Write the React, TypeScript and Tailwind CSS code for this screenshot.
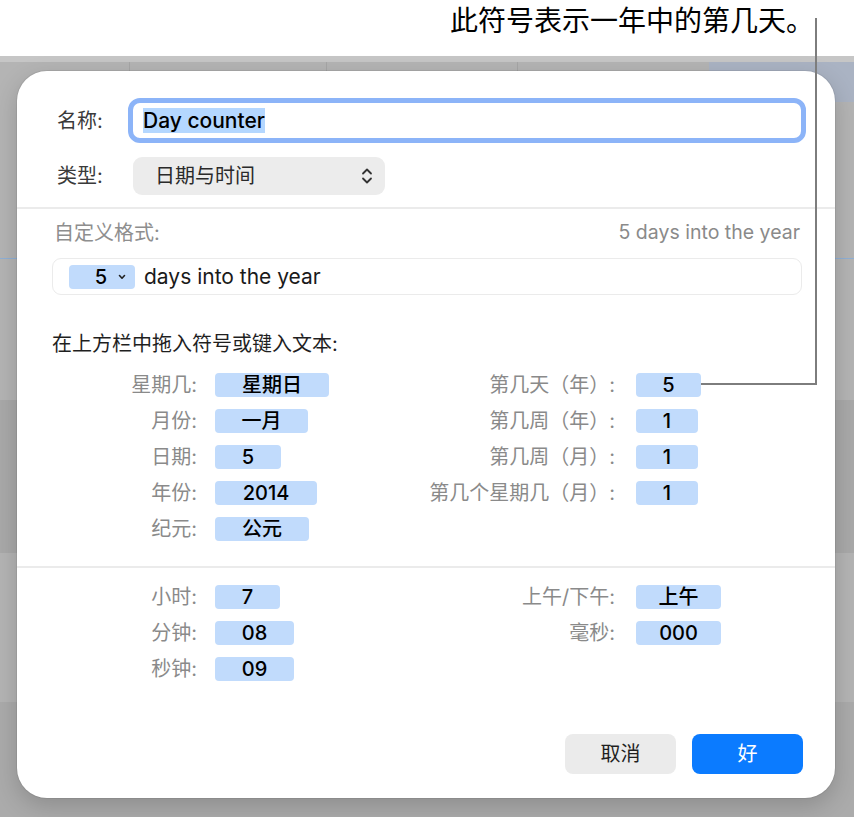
import React from "react";

type Tok = { label: string; value: string; w: number };

const leftDate: Tok[] = [
  { label: "星期几:", value: "星期日", w: 114 },
  { label: "月份:", value: "一月", w: 93 },
  { label: "日期:", value: "5", w: 66 },
  { label: "年份:", value: "2014", w: 102 },
  { label: "纪元:", value: "公元", w: 94 },
];
const rightDate: Tok[] = [
  { label: "第几天（年）:", value: "5", w: 65 },
  { label: "第几周（年）:", value: "1", w: 62 },
  { label: "第几周（月）:", value: "1", w: 62 },
  { label: "第几个星期几（月）:", value: "1", w: 62 },
];
const leftTime: Tok[] = [
  { label: "小时:", value: "7", w: 65 },
  { label: "分钟:", value: "08", w: 79 },
  { label: "秒钟:", value: "09", w: 79 },
];
const rightTime: Tok[] = [
  { label: "上午/下午:", value: "上午", w: 85 },
  { label: "毫秒:", value: "000", w: 85 },
];

function Token({ value, w }: { value: string; w: number }) {
  return (
    <div
      className="h-[24px] rounded-[4px] bg-[#c1dbfc] flex items-center justify-center text-[20px] font-medium text-black leading-none"
      style={{ width: w }}
    >
      {value}
    </div>
  );
}

function Column({ items, labelW, gap }: { items: Tok[]; labelW: number; gap: number }) {
  return (
    <div className="flex flex-col gap-[12px]">
      {items.map((t) => (
        <div key={t.label} className="flex items-center h-[24px]" style={{ gap }}>
          <div
            className="text-right text-[20px] text-[#8a8a8a] whitespace-nowrap leading-none"
            style={{ width: labelW }}
          >
            {t.label}
          </div>
          <Token value={t.value} w={t.w} />
        </div>
      ))}
    </div>
  );
}

export default function App() {
  return (
    <div className="relative w-[854px] h-[817px] overflow-hidden bg-white font-[Inter,'Noto_Sans_CJK_SC',sans-serif]">
      {/* callout text */}
      <div className="h-[56px] flex justify-end pr-[40px] pt-[3px]">
        <span className="text-[28px] leading-[32px] text-black font-['Noto_Sans_CJK_SC',sans-serif]">
          此符号表示一年中的第几天。
        </span>
      </div>

      {/* app background */}
      <div className="relative h-[761px] bg-[#b4b4b4] pt-[15px] pl-[17px] pr-[19px] pb-[19px]">
        <div className="absolute left-0 right-0 top-0 h-[6px] bg-[#c6c6c6]" />
        <div className="absolute left-[709px] right-0 top-[6px] h-[40px] bg-[#aab3c3]" />
        <div className="absolute left-[129px] top-[6px] h-[20px] w-px bg-[#a6a6a6]" />
        <div className="absolute left-[326px] top-[6px] h-[20px] w-px bg-[#a6a6a6]" />
        <div className="absolute left-[517px] top-[6px] h-[20px] w-px bg-[#a6a6a6]" />
        <div className="absolute left-0 right-0 top-[202px] h-px bg-[#8fb0d6]" />
        <div className="absolute left-0 right-0 top-[344px] h-[153px] bg-[#a9a9a9]" />
        <div className="absolute left-0 right-0 top-[646px] bottom-0 bg-[#ababab]" />

        {/* dialog */}
        <div className="relative z-10 w-[818px] h-[727px] rounded-[30px] bg-white shadow-[0_0_0_1px_rgba(0,0,0,0.06),0_8px_24px_rgba(0,0,0,0.18)] flex flex-col">
          {/* name / type */}
          <div className="pt-[27px] pl-[40px] pr-[29px] pb-[12px] flex flex-col gap-[14px]">
            <div className="flex items-center h-[45px]">
              <div className="w-[71px] text-[20px] text-[#3a3a3a] leading-none">名称:</div>
              <div className="flex-1 h-[45px] rounded-[12px] border-[5px] border-[#8cb4f8] flex items-center pl-[10px]">
                <span className="bg-[#b4d7ff] text-[21px] leading-[25px] text-black font-medium">Day counter</span>
              </div>
            </div>
            <div className="flex items-center h-[38px]">
              <div className="w-[71px] text-[20px] text-[#3a3a3a] leading-none">类型:</div>
              <div className="ml-[5px] w-[252px] h-[38px] rounded-[9px] bg-[#ececec] flex items-center justify-between pl-[22px] pr-[12px]">
                <span className="text-[20px] text-[#2a2a2a] leading-none">日期与时间</span>
                <svg width="12" height="18" viewBox="0 0 12 18" fill="none" stroke="#333" strokeWidth="1.8" strokeLinecap="round" strokeLinejoin="round">
                  <path d="M2 6.5 L6 2.5 L10 6.5" />
                  <path d="M2 11.5 L6 15.5 L10 11.5" />
                </svg>
              </div>
            </div>
          </div>
          <div className="h-[2px] bg-[#ebebeb]" />

          {/* custom format */}
          <div className="pl-[35px] pr-[33px] pt-[11px]">
            <div className="flex items-center justify-between h-[26px] pl-[2px] pr-[2px]">
              <span className="text-[20px] text-[#8e8e8e] leading-none">自定义格式:</span>
              <span className="text-[19.5px] text-[#8a8a8a] leading-none">5 days into the year</span>
            </div>
            <div className="mt-[12px] h-[37px] rounded-[9px] border border-[#ebebeb] flex items-center pl-[16px] gap-[9px]">
              <div className="w-[66px] h-[24px] rounded-[4px] bg-[#c1dbfc] flex items-center justify-end pr-[9px] gap-[11px]">
                <span className="text-[20px] font-medium text-black leading-none">5</span>
                <svg width="8" height="6" viewBox="0 0 8 6" fill="none" stroke="#222" strokeWidth="1.6" strokeLinecap="round" strokeLinejoin="round">
                  <path d="M1.5 1.5 L4 4.2 L6.5 1.5" />
                </svg>
              </div>
              <span className="text-[21px] text-[#1a1a1a] leading-none">days into the year</span>
            </div>
            <div className="mt-[35px] h-[28px] flex items-center text-[20px] text-[#1f1f1f] leading-none">
              在上方栏中拖入符号或键入文本:
            </div>

            <div className="mt-[15px] flex">
              <div className="w-[300px]">
                <Column items={leftDate} labelW={145} gap={18} />
              </div>
              <Column items={rightDate} labelW={263} gap={21} />
            </div>
          </div>

          <div className="mt-[25px] h-[2px] bg-[#ebebeb]" />

          {/* time */}
          <div className="pl-[35px] pt-[17px] flex">
            <div className="w-[300px]">
              <Column items={leftTime} labelW={145} gap={18} />
            </div>
            <Column items={rightTime} labelW={263} gap={21} />
          </div>

          {/* buttons */}
          <div className="mt-auto pb-[24px] pr-[32px] flex justify-end gap-[16px]">
            <button className="w-[111px] h-[40px] rounded-[8px] bg-[#ebebeb] text-[20px] text-[#1f1f1f] leading-none">取消</button>
            <button className="w-[111px] h-[40px] rounded-[8px] bg-[#0b7bff] text-[20px] text-white leading-none">好</button>
          </div>
        </div>
      </div>

      {/* callout leader line */}
      <div className="absolute z-20 left-[815px] top-[18px] w-[2px] h-[367px] bg-[#7d7d7d]" />
      <div className="absolute z-20 left-[701px] top-[383px] w-[116px] h-[2px] bg-[#7d7d7d]" />
    </div>
  );
}
